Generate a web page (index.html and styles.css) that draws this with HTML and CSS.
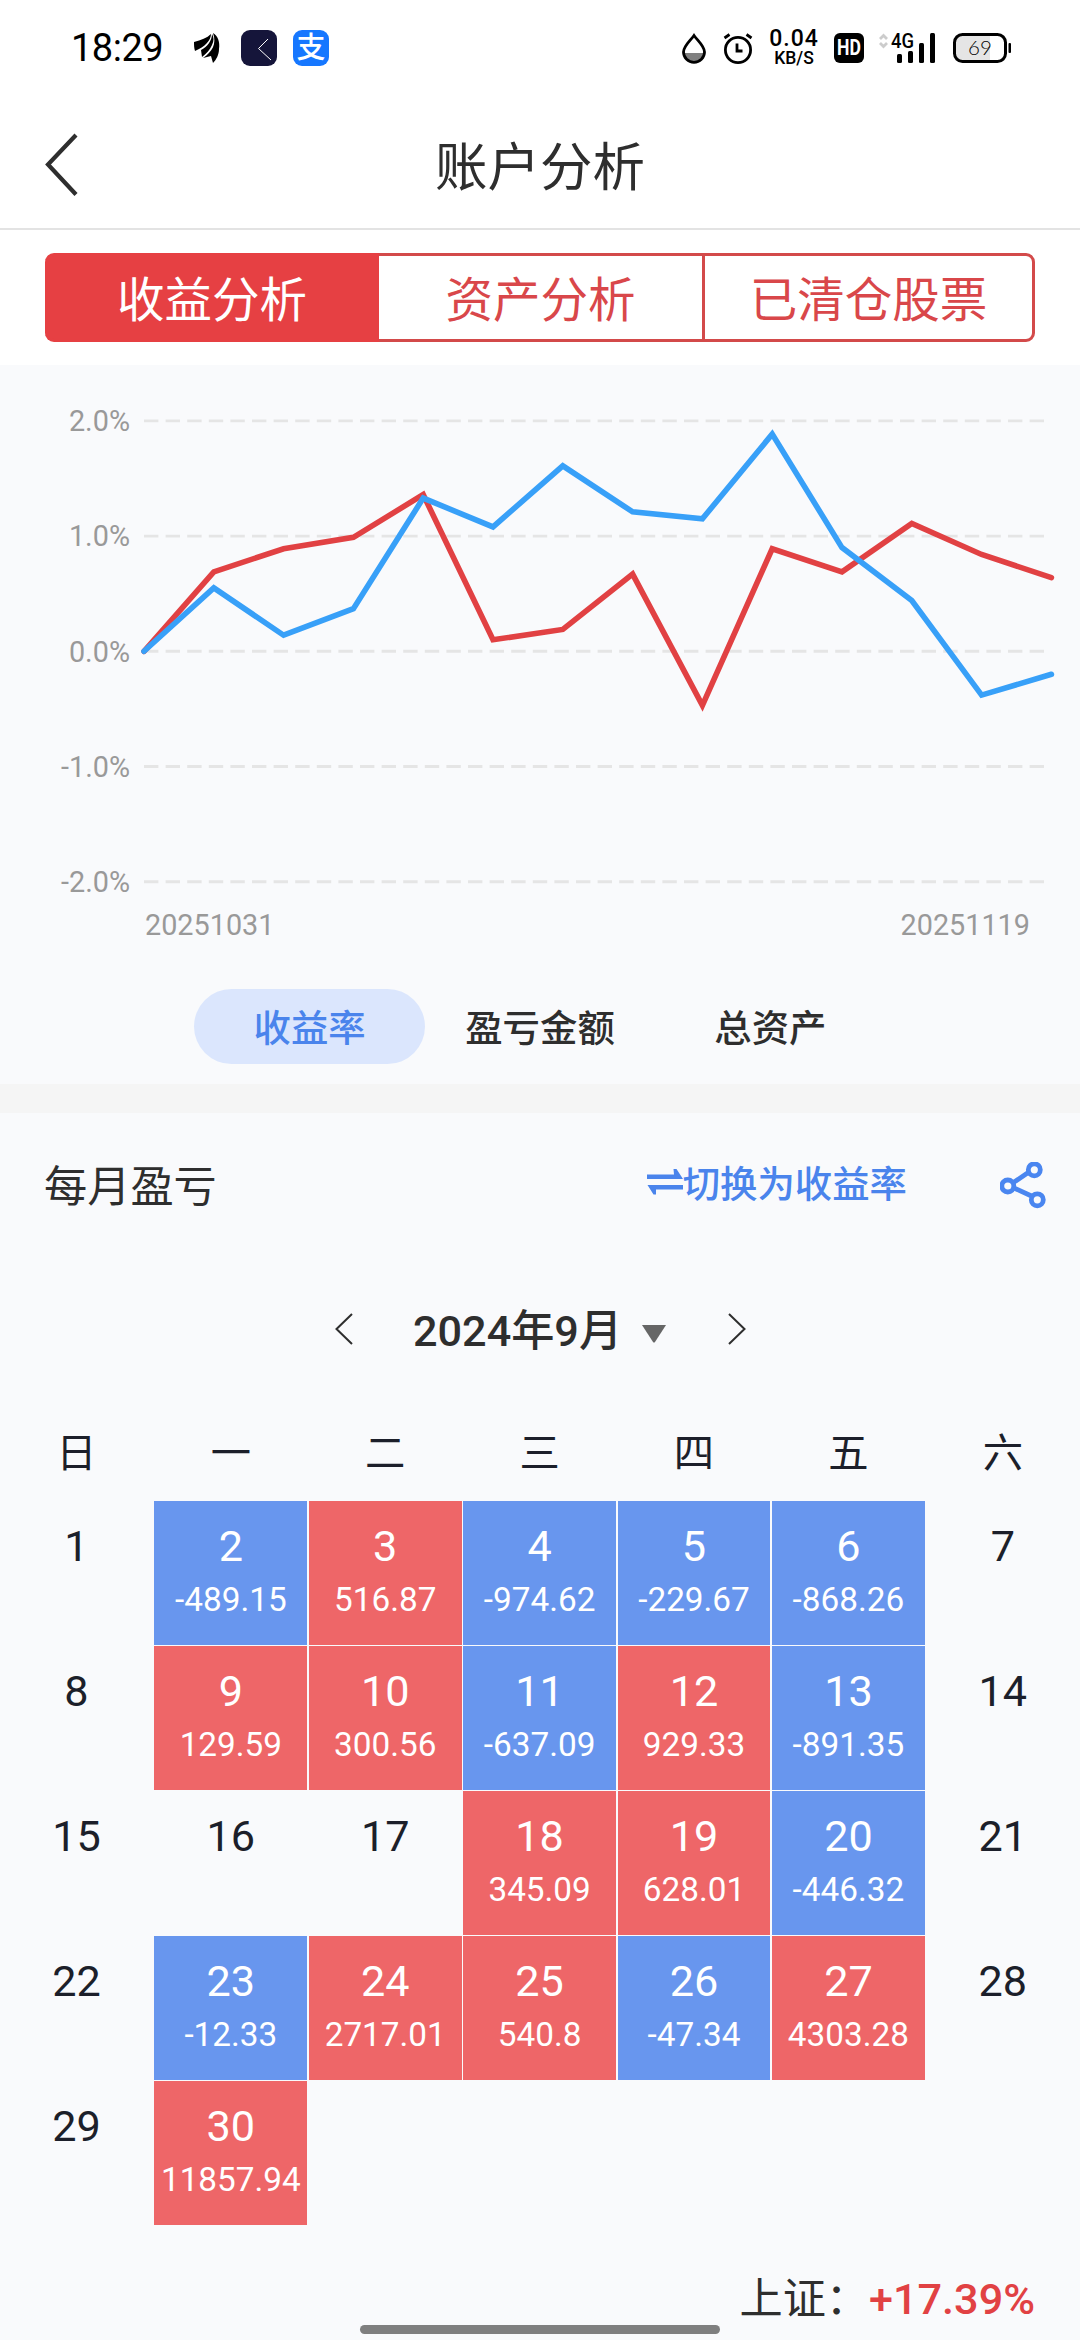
FILE: index.html
```
<!DOCTYPE html>
<html lang="zh-CN">

<head>
    <meta charset="UTF-8">
    <meta name="viewport" content="width=device-width, initial-scale=1.0">
    <title>账户分析</title>
    <link rel="stylesheet" href="styles.css">
</head>

<body>
    <div class="status-bar">
        <span class="time">18:29</span>
        <svg class="icon-wing" width="26" height="31" viewBox="0 0 26 31">
            <path d="M0 9 C7 7 13 5 17 1 C17 7 11 14 1 18 C0 15 0 12 0 9Z" />
            <path d="M18 1 C20 4 20 8 18 12 C16 17 12 21 8 24 L7 17 C13 14 18 8 18 1Z" />
            <path d="M19 0 C24 3 26 9 25 16 C25 22 22 27 19 30 L17 23 L9 25 C18 19 23 11 19 0Z" />
        </svg>
        <svg class="icon-app" width="36" height="36" viewBox="0 0 36 36">
            <rect width="36" height="36" rx="9" fill="#15153a" />
            <path d="M27 9 L17.500 18.500 L30 30" fill="none" stroke="#fff" stroke-width="1" />
        </svg>
        <span class="icon-pay">支</span>

        <div class="status-right">
            <svg width="24" height="31" viewBox="0 0 24 31">
                <path d="M2 20 h20 a10 9 0 0 1 -20 0Z" fill="#808080" />
                <path d="M12 2.500 C8 8 1.500 13 1.500 19 a10.500 10.300 0 0 0 21 0 C22.500 13 16 8 12 2.500Z" fill="none" stroke="#000" stroke-width="2.800" />
            </svg>
            <svg class="icon-alarm" width="30" height="31" viewBox="0 0 30 31">
                <circle cx="15" cy="17" r="12.600" fill="none" stroke="#000" stroke-width="2.800" />
                <path d="M14 10.500 V18 H19.500 M1.500 5 L6.500 1.500 M28.500 5 L23.500 1.500" fill="none" stroke="#000" stroke-width="2.800" />
            </svg>
            <div class="speed">
                <span class="speed-value">0.04</span>
                <span class="speed-unit">KB/S</span>
            </div>
            <span class="hd"><b>HD</b></span>
            <svg class="icon-signal" width="57" height="36" viewBox="0 -3 57 36">
                <path d="M1 6 L4.500 2.500 L8 6 M1 10 L4.500 13.500 L8 10" fill="none" stroke="#ccc" stroke-width="2.800" />
                <text x="12" y="15.200" textLength="23" lengthAdjust="spacingAndGlyphs">4G</text>
                <rect x="18" y="21" width="5" height="9" rx="1.500" />
                <rect x="29" y="18" width="5" height="12" rx="1.500" />
                <rect x="40" y="10" width="5" height="20" rx="1.500" />
                <rect x="51" y="0" width="5" height="30" rx="1.500" />
            </svg>
            <svg class="icon-battery" width="59" height="30" viewBox="0 0 59 30">
                <path d="M10 1.500 H37 V28.500 H10 Q1.500 28.500 1.500 20 V10 Q1.500 1.500 10 1.500Z" fill="#e5e5e5" />
                <rect x="1.500" y="1.500" width="51" height="27" rx="8" fill="none" stroke="#000" stroke-width="3" />
                <rect x="55.500" y="10" width="2.500" height="10" rx="1" />
                <text x="27" y="22" text-anchor="middle">69</text>
            </svg>
        </div>
    </div>

    <header class="header">
        <svg class="back" width="34" height="64" viewBox="0 0 34 64">
            <path d="M31 2 L3 31.500 L31 61.500" fill="none" stroke="#2e2e2e" stroke-width="4.200" />
        </svg>
        <h1>账户分析</h1>
    </header>

    <nav class="tabs">
        <button class="tab active">收益分析</button>
        <button class="tab">资产分析</button>
        <button class="tab">已清仓股票</button>
    </nav>

    <section class="chart-section">
        <svg class="chart" width="1080" height="600" viewBox="0 0 1080 600">
            <!-- origin is the 0.0% point, 1% = 115.2px -->
            <g transform="translate(144 286.3)">
                <g class="grid-lines">
                    <line x1="0" y1="-230.400" x2="900" y2="-230.400" />
                    <line x1="0" y1="-115.200" x2="900" y2="-115.200" />
                    <line x1="0" y1="0" x2="900" y2="0" />
                    <line x1="0" y1="115.200" x2="900" y2="115.200" />
                    <line x1="0" y1="230.400" x2="900" y2="230.400" />
                </g>
                <g class="y-labels">
                    <text x="-14" y="-220.200">2.0%</text>
                    <text x="-14" y="-105">1.0%</text>
                    <text x="-14" y="10.200">0.0%</text>
                    <text x="-14" y="125.400">-1.0%</text>
                    <text x="-14" y="240.600">-2.0%</text>
                </g>
                <text x="1" y="283.600">20251031</text>
                <text x="886" y="283.600" text-anchor="end">20251119</text>
                <polyline class="line-red" points="0,0 69.8,-79.5 139.6,-102.5 209.4,-114 279.2,-156.7 349,-11.5 418.8,-21.9 488.6,-77.2 558.4,54.1 628.2,-102.5 698,-79.5 767.8,-127.9 837.6,-96.8 907.4,-73.7" />
                <polyline class="line-blue" points="0,0 69.8,-63.4 139.6,-16.1 209.4,-42.6 279.2,-153.2 349,-124.4 418.8,-185.5 488.6,-139.4 558.4,-132.5 628.2,-217.2 698,-103.7 767.8,-50.7 837.6,43.8 907.4,23" />
            </g>
        </svg>
        <div class="pills">
            <button class="pill active">收益率</button>
            <button class="pill">盈亏金额</button>
            <button class="pill">总资产</button>
        </div>
    </section>

    <section class="monthly">
        <div class="monthly-head">
            <h2>每月盈亏</h2>
            <a class="switch">
                <svg width="36" height="26" viewBox="0 0 36 26">
                    <path d="M0 5.500 H27 L26.500 0 H29.500 L36 10 H0Z M36 16 V20.500 H9 V25.500 H6.500 L0.500 16Z" />
                </svg>切换为收益率</a>
            <svg class="share" width="48" height="48" viewBox="0 0 48 48">
                <path d="M13.500 20.500 L29 10 M14 26 L31.500 34" />
                <circle cx="34.300" cy="7.800" r="6" />
                <circle cx="7.800" cy="24" r="6" />
                <circle cx="37.300" cy="37.800" r="6" />
            </svg>
        </div>

        <div class="month-picker">
            <svg width="18" height="32" viewBox="0 0 18 32">
                <path d="M17 1 L1.500 16 L17 31" fill="none" stroke="#2e2e2e" stroke-width="2" />
            </svg>
            <span class="month">2024年9月</span>
            <svg class="caret" width="24" height="18" viewBox="0 0 24 18">
                <path d="M0 0 H24 L13 17 Q12 18 11 17Z" fill="#666" />
            </svg>
            <svg width="18" height="32" viewBox="0 0 18 32">
                <path d="M1 1 L16.500 16 L1 31" fill="none" stroke="#2e2e2e" stroke-width="2" />
            </svg>
        </div>

        <div class="weekdays">
            <span>日</span><span>一</span><span>二</span><span>三</span><span>四</span><span>五</span><span>六</span>
        </div>

        <div class="calendar">
            <div class="day">1</div>
            <div class="day loss">2<span>-489.15</span></div>
            <div class="day gain">3<span>516.87</span></div>
            <div class="day loss">4<span>-974.62</span></div>
            <div class="day loss">5<span>-229.67</span></div>
            <div class="day loss">6<span>-868.26</span></div>
            <div class="day">7</div>

            <div class="day">8</div>
            <div class="day gain">9<span>129.59</span></div>
            <div class="day gain">10<span>300.56</span></div>
            <div class="day loss">11<span>-637.09</span></div>
            <div class="day gain">12<span>929.33</span></div>
            <div class="day loss">13<span>-891.35</span></div>
            <div class="day">14</div>

            <div class="day">15</div>
            <div class="day">16</div>
            <div class="day">17</div>
            <div class="day gain">18<span>345.09</span></div>
            <div class="day gain">19<span>628.01</span></div>
            <div class="day loss">20<span>-446.32</span></div>
            <div class="day">21</div>

            <div class="day">22</div>
            <div class="day loss">23<span>-12.33</span></div>
            <div class="day gain">24<span>2717.01</span></div>
            <div class="day gain">25<span>540.8</span></div>
            <div class="day loss">26<span>-47.34</span></div>
            <div class="day gain">27<span>4303.28</span></div>
            <div class="day">28</div>

            <div class="day">29</div>
            <div class="day gain">30<span>11857.94</span></div>
        </div>

        <div class="index-row">上证：<strong>+17.39%</strong></div>
    </section>

    <div class="home-indicator"></div>
</body>

</html>
```

FILE: styles.css
```
* {
    margin: 0;
    padding: 0;
    box-sizing: border-box;
}

body {
    position: relative;
    width: 1080px;
    height: 2340px;
    overflow: hidden;
    font-family: Roboto, "Noto Sans CJK SC", sans-serif;
    line-height: 1;
    color: #2e2e2e;
    background: #fff;
}

svg {
    display: block;
    flex: none;
}

button {
    border: none;
    background: none;
    font: inherit;
    color: inherit;
}

/* Status bar */
.status-bar {
    display: flex;
    align-items: center;
    height: 96px;
    padding: 0 68px 0 71px;
    color: #000;
}

.time {
    width: 123px;
    font-size: 38px;
    letter-spacing: -0.5px;
}

.icon-app {
    margin-left: 21px;
}

.icon-pay {
    width: 36px;
    height: 36px;
    margin-left: 16px;
    border-radius: 9px;
    background: #1677ff;
    color: #fff;
    font-size: 29px;
    font-weight: 500;
    line-height: 36px;
    text-align: center;
}

.status-right {
    display: flex;
    align-items: center;
    margin-left: auto;
}

.icon-alarm {
    margin-left: 17px;
}

.speed {
    display: flex;
    flex-direction: column;
    align-items: center;
    width: 52px;
    margin-left: 15px;
    font-weight: 500;
}

.speed-value {
    font-size: 23px;
    line-height: 23px;
    margin-top: -3px;
    letter-spacing: 1px;
}

.speed-unit {
    font-size: 17.5px;
    line-height: 17px;
}

.hd {
    display: flex;
    align-items: center;
    justify-content: center;
    width: 30px;
    height: 30px;
    margin-left: 14px;
    border-radius: 6px;
    background: #000;
    color: #fff;
    font-size: 22px;
}

.hd b {
    transform: scaleX(0.8);
}

.icon-signal {
    margin-left: 15px;
}

.icon-signal text {
    font-size: 20px;
    font-weight: 500;
}

.icon-battery {
    margin-left: 17px;
}

.icon-battery text {
    font-family: Lato, sans-serif;
    font-size: 20.5px;
    font-weight: 300;
}

/* Header */
.header {
    display: flex;
    align-items: center;
    height: 134px;
    padding: 8px 45px 0;
    border-bottom: 2px solid #e3e3e3;
}

.header .back {
    margin-top: -3px;
}

.header h1 {
    flex: 1;
    margin-right: 34px;
    padding-top: 4px;
    font-size: 52.5px;
    font-weight: 400;
    text-align: center;
}

/* Top tabs */
.tabs {
    display: flex;
    height: 135px;
    padding: 23px 45px;
}

.tab {
    flex: 0 0 323px;
    padding-top: 8px;
    border: 3px solid #d34a4a;
    border-width: 3px 0;
    color: #d9474a;
    font-size: 47.5px;
}

.tab:first-child {
    flex-basis: 334px;
    border-radius: 9px 0 0 9px;
}

.tab:last-child {
    flex-basis: 333px;
    border-width: 3px;
    border-radius: 0 9px 9px 0;
}

.tab.active {
    border-color: #e64043;
    background: #e64043;
    color: #fff;
}

/* Chart */
.chart-section {
    padding-bottom: 20px;
    background: #f9fafc;
}

.chart text {
    fill: #999;
    font-size: 28.8px;
}

.grid-lines line {
    stroke: #e5e5e5;
    stroke-width: 2.9;
    stroke-dasharray: 14.4 7.2;
}

.y-labels {
    text-anchor: end;
}

.chart polyline {
    fill: none;
    stroke-width: 5.6;
    stroke-linecap: round;
}

.line-red {
    stroke: #e14143;
}

.line-blue {
    stroke: #38a0f8;
}

.pills {
    display: flex;
    justify-content: center;
    padding-top: 24px;
}

.pill {
    width: 230.4px;
    height: 75px;
    border-radius: 38px;
    padding-top: 6px;
    font-size: 37.4px;
    font-weight: 500;
}

.pill.active {
    background: #dbe6fd;
    color: #4a84ec;
}

/* Monthly profit */
.monthly {
    height: 1256px;
    border-top: 29px solid #f5f5f5;
    background: #f9fafc;
}

.monthly-head {
    display: flex;
    align-items: center;
    height: 146px;
    padding: 0 32px 0 44px;
}

.monthly-head h2 {
    padding-top: 3px;
    font-size: 43.2px;
    font-weight: 400;
}

.switch {
    display: flex;
    align-items: center;
    margin-left: auto;
    color: #4a84ec;
    font-size: 37.4px;
    font-weight: 500;
}

.switch svg {
    margin-top: -9px;
    fill: #4a84ec;
}

.share {
    margin-left: 93px;
    fill: none;
    stroke: #4a86f0;
    stroke-width: 4.8;
}

.month-picker {
    display: flex;
    align-items: center;
    height: 139px;
    padding-left: 335px;
}

.month {
    margin-left: 60px;
    padding-top: 6px;
    font-size: 43.2px;
    font-weight: 500;
}

.caret {
    margin: 11px 62px 0 20px;
}

.weekdays {
    display: grid;
    grid-template-columns: repeat(7, 152.9px);
    column-gap: 1.5px;
    align-items: center;
    height: 103px;
    padding-top: 9px;
    font-size: 40.3px;
    text-align: center;
    color: #1c1f2a;
}

.calendar {
    display: grid;
    grid-template-columns: repeat(7, 152.9px);
    grid-auto-rows: 143.5px;
    gap: 1.5px;
}

.day {
    padding-top: 24px;
    font-size: 43.2px;
    text-align: center;
    color: #1c1f2a;
}

.day span {
    display: block;
    margin-top: 15px;
    font-size: 33.3px;
}

.gain {
    background: #ee6668;
    color: #fff;
}

.loss {
    background: #6896ee;
    color: #fff;
}

.index-row {
    display: flex;
    justify-content: flex-end;
    padding: 53px 45px 0 0;
    font-size: 43.2px;
}

.index-row strong {
    font-weight: 500;
    color: #e14143;
}

.home-indicator {
    position: absolute;
    left: 360px;
    bottom: 6px;
    width: 360px;
    height: 9px;
    border-radius: 5px;
    background: #7f7f7f;
}
```
